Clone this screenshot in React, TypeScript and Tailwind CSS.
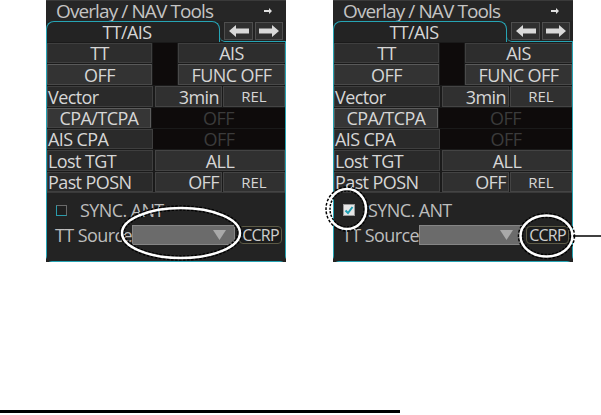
import React from 'react';

const font = { fontFamily: '"Open Sans", "Noto Sans", sans-serif' };

function ArrowLeft() {
  return (
    <svg width="20" height="12" viewBox="0 0 20 12">
      <path d="M0 6 L7 0 L7 3.5 L20 3.5 L20 8.5 L7 8.5 L7 12 Z" fill="#d9d9d9" />
    </svg>
  );
}

function ArrowRight() {
  return (
    <svg width="20" height="12" viewBox="0 0 20 12">
      <path d="M20 6 L13 0 L13 3.5 L0 3.5 L0 8.5 L13 8.5 L13 12 Z" fill="#d9d9d9" />
    </svg>
  );
}

function Panel({ checked }: { checked: boolean }) {
  return (
    <div className="w-[240px] bg-[#232323] flex flex-col text-[#d6d6d6]" style={font}>
      {/* title */}
      <div className="h-[21px] flex items-center pl-[10px] pr-[14px] bg-[#262626] border-t border-[#3a3a3a]">
        <span className="text-[19px] leading-none text-[#c4c4c4] tracking-[-0.9px] whitespace-nowrap">Overlay / NAV Tools</span>
        <div className="ml-auto">
          <svg width="8" height="6" viewBox="0 0 8 6">
            <path d="M8 3 L5 0 L5 2 L0 2 L0 4 L5 4 L5 6 Z" fill="#e0e0e0" />
          </svg>
        </div>
      </div>
      {/* tab row */}
      <div className="h-[21px] flex">
        <div className="w-[174px] h-full border-t border-l border-r border-[#26a4b4] rounded-t-[8px] flex items-center justify-center text-[18px] tracking-[-0.6px] leading-none pr-[12px]">
          TT/AIS
        </div>
        <div className="flex-1 h-full border-b border-[#26a4b4] rounded-bl-[5px] flex items-start gap-[2px] pl-[4px] pt-[1px]">
          <div className="w-[29px] h-[18px] bg-[#2f2f2f] border border-[#4e4e4e] flex items-center justify-center"><ArrowLeft /></div>
          <div className="w-[28px] h-[18px] bg-[#2f2f2f] border border-[#4e4e4e] flex items-center justify-center"><ArrowRight /></div>
        </div>
      </div>
      {/* frame */}
      <div className="border-l border-r border-b border-[#26a4b4] rounded-b-[6px] flex flex-col text-[18px] tracking-[-0.6px] leading-none whitespace-nowrap">
        <div className="flex gap-px bg-[#1a1a1a] pt-px">
          <div className="w-[105px] flex flex-col gap-px">
            <div className="h-[20px] bg-[#2d2d2d] border border-[#3f3f3f] flex items-center justify-center">TT</div>
            <div className="h-[21px] bg-[#333333] border border-[#4a4a4a] border-t-[#5a5a5a] flex items-center justify-center">OFF</div>
          </div>
          <div className="w-[24px] bg-[#0e0b0b]" />
          <div className="flex-1 flex flex-col gap-px">
            <div className="h-[20px] bg-[#2d2d2d] border border-[#3f3f3f] flex items-center justify-center">AIS</div>
            <div className="h-[21px] bg-[#333333] border border-[#4a4a4a] border-t-[#5a5a5a] flex items-center justify-center">FUNC OFF</div>
          </div>
        </div>
        <div className="h-[22px] flex bg-[#1a1a1a] pt-px">
          <div className="w-[106px] bg-[#2a2a2a] border border-[#3f3f3f] flex items-center">Vector</div>
          <div className="ml-[2px] w-[67px] bg-[#303030] border border-[#444444] flex items-center justify-end pr-[2px]">3min</div>
          <div className="ml-px flex-1 bg-[#303030] border border-[#444444] flex items-center justify-center text-[15px] tracking-normal">REL</div>
        </div>
        <div className="h-[21px] flex bg-[#1a1a1a] pt-px">
          <div className="w-[104px] bg-[#363636] border border-[#5c5c5c] border-b-[#444444] flex items-center justify-center">CPA/TCPA</div>
          <div className="ml-px flex-1 bg-[#0e0b0b] flex items-center justify-center text-[#3b3b3b]">OFF</div>
        </div>
        <div className="h-[21px] flex bg-[#1a1a1a] pt-px">
          <div className="w-[106px] bg-[#2a2a2a] border border-[#3f3f3f] flex items-center">AIS CPA</div>
          <div className="flex-1 bg-[#0e0b0b] flex items-center justify-center text-[#3b3b3b]">OFF</div>
        </div>
        <div className="h-[22px] flex bg-[#1a1a1a] pt-px">
          <div className="w-[106px] bg-[#2a2a2a] border border-[#3f3f3f] flex items-center">Lost TGT</div>
          <div className="ml-[2px] flex-1 bg-[#303030] border border-[#444444] flex items-center justify-center">ALL</div>
        </div>
        <div className="h-[21px] flex bg-[#1a1a1a] pt-px">
          <div className="w-[106px] bg-[#2a2a2a] border border-[#3f3f3f] flex items-center">Past POSN</div>
          <div className="ml-[2px] w-[67px] bg-[#303030] border border-[#444444] flex items-center justify-end pr-[2px]">OFF</div>
          <div className="ml-px flex-1 bg-[#303030] border border-[#444444] flex items-center justify-center text-[15px] tracking-normal">REL</div>
        </div>
        {/* bottom section */}
        <div className="h-[69px] bg-[#232323] border-t border-[#3a3a3a] flex flex-col">
          <div className="mt-[10px] h-[14px] flex items-center pl-[9px]">
            {checked ? (
              <div className="w-[12px] h-[12px] bg-[#e6e6e6] border border-[#9a9a9a] flex items-center justify-center">
                <svg width="10" height="10" viewBox="0 0 10 10">
                  <path d="M1.5 5.5 L4 8 L8.5 2" stroke="#1e9fb3" strokeWidth="2" fill="none" />
                </svg>
              </div>
            ) : (
              <div className="w-[11px] h-[11px] border border-[#6a6a6a] border-l-[#2a9cac] border-b-[#2a9cac] bg-[#1f1f1f]" />
            )}
            <span className="ml-[13px] text-[#bdbdbd]">SYNC. ANT</span>
          </div>
          <div className="mt-[8px] h-[20px] flex items-center pl-[8px]">
            <span className="w-[77px] text-[#bdbdbd]">TT Source:</span>
            <div className="relative w-[103px] h-[20px] bg-[#6b6b6b] border border-[#858585] flex items-center justify-end pr-[8px]">
              <svg width="13" height="10" viewBox="0 0 13 10">
                <path d="M0 0 L13 0 L6.5 10 Z" fill="#a9a9a9" />
              </svg>
            </div>
            <div className="ml-[4px] w-[43px] h-[18px] bg-[#1c1c1c] border border-[#5c5a46] rounded-[4px] flex items-center justify-center text-[16px] tracking-[-0.8px] text-[#cfcfcf]">
              CCRP
            </div>
          </div>
        </div>
      </div>
    </div>
  );
}

function Mark({ cx, cy, rx, ry }: { cx: number; cy: number; rx: number; ry: number }) {
  return (
    <g>
      <ellipse cx={cx} cy={cy} rx={rx} ry={ry} fill="none" stroke="#000" strokeWidth="5.5" strokeDasharray="2.5 1.5" />
      <ellipse cx={cx} cy={cy} rx={rx} ry={ry} fill="none" stroke="#fff" strokeWidth="2.5" />
    </g>
  );
}

export default function App() {
  return (
    <div className="relative w-[601px] h-[415px] bg-white overflow-hidden">
      <div className="flex pl-[46px] gap-[47px]">
        <Panel checked={false} />
        <Panel checked={true} />
      </div>
      <div className="mt-[148px] w-[400px] h-[3px] bg-black" />
      <svg className="absolute left-0 top-0 pointer-events-none" width="601" height="415">
        <Mark cx={181} cy={233} rx={59} ry={25} />
        <Mark cx={347} cy={209} rx={19} ry={20} />
        <Mark cx={546.5} cy={236} rx={26} ry={20.5} />
        <line x1="573" y1="236" x2="601" y2="236" stroke="#000" strokeWidth="1.5" />
      </svg>
    </div>
  );
}
